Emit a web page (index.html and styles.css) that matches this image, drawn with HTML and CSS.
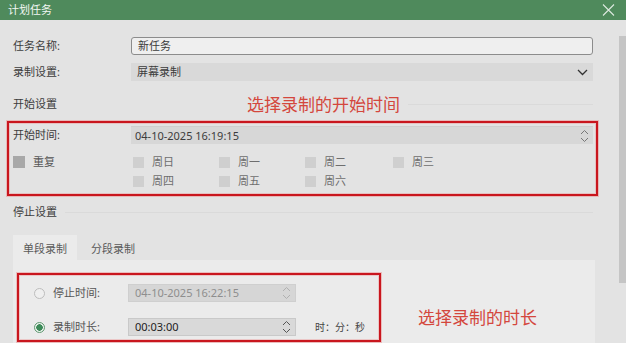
FILE: index.html
```html
<!DOCTYPE html>
<html lang="zh">
<head>
<meta charset="utf-8">
<link rel="stylesheet" href="styles.css">
</head>
<body>
<div class="window">
  <div class="titlebar">
    <span class="title">计划任务</span>
    <svg class="close" width="13" height="12" viewBox="0 0 13 12"><path d="M1 0.5 L12 11.5 M12 0.5 L1 11.5" stroke="#dce8df" stroke-width="1.1" fill="none"/></svg>
  </div>
  <div class="body">
    <div class="main">
      <div class="row r1">
        <span class="label">任务名称:</span>
        <div class="field text">新任务</div>
      </div>
      <div class="row r2">
        <span class="label">录制设置:</span>
        <div class="field select"><span class="grow">屏幕录制</span>
          <svg width="11" height="7" viewBox="0 0 11 7"><path d="M1 1 L5.5 5.5 L10 1" stroke="#333" stroke-width="1.3" fill="none"/></svg>
        </div>
      </div>
      <div class="heading h1">
        <span class="htext">开始设置</span>
        <span class="note note1">选择录制的开始时间</span>
        <span class="rule"></span>
      </div>
      <div class="redbox box1">
        <div class="row">
          <span class="label">开始时间:</span>
          <div class="field date"><span class="grow">04-10-2025 16:19:15</span>
            <svg class="spin" width="9" height="14" viewBox="0 0 9 14"><path d="M1 5 L4.5 1.5 L8 5 M1 9 L4.5 12.5 L8 9" stroke="#777" stroke-width="1" fill="none"/></svg>
          </div>
        </div>
        <div class="repeat">
          <div class="chk repchk"><span class="box dark"></span><span class="clabel">重复</span></div>
          <div class="days">
            <div class="chk"><span class="box"></span><span class="clabel">周日</span></div>
            <div class="chk"><span class="box"></span><span class="clabel">周一</span></div>
            <div class="chk"><span class="box"></span><span class="clabel">周二</span></div>
            <div class="chk"><span class="box"></span><span class="clabel">周三</span></div>
            <div class="chk"><span class="box"></span><span class="clabel">周四</span></div>
            <div class="chk"><span class="box"></span><span class="clabel">周五</span></div>
            <div class="chk"><span class="box"></span><span class="clabel">周六</span></div>
          </div>
        </div>
      </div>
      <div class="heading h2">
        <span class="htext">停止设置</span>
        <span class="rule"></span>
      </div>
      <div class="tabs">
        <span class="tab active">单段录制</span>
        <span class="tab">分段录制</span>
      </div>
      <div class="panel">
        <div class="redbox box2">
          <div class="srow">
            <span class="radio"></span>
            <span class="slabel">停止时间:</span>
            <div class="field sfield disabled"><span class="grow">04-10-2025 16:22:15</span>
              <svg class="spin" width="9" height="14" viewBox="0 0 9 14"><path d="M1 5 L4.5 1.5 L8 5 M1 9 L4.5 12.5 L8 9" stroke="#b0b0b0" stroke-width="1" fill="none"/></svg>
            </div>
          </div>
          <div class="srow r-second">
            <span class="radio on"></span>
            <span class="slabel">录制时长:</span>
            <div class="field sfield active-field"><span class="grow">00:03:00</span>
              <svg class="spin" width="9" height="14" viewBox="0 0 9 14"><path d="M1 5 L4.5 1.5 L8 5 M1 9 L4.5 12.5 L8 9" stroke="#555" stroke-width="1" fill="none"/></svg>
            </div>
            <span class="units">时：分：秒</span>
          </div>
        </div>
        <span class="note note2">选择录制的时长</span>
      </div>
    </div>
    <div class="scrollbar"><div class="thumb"></div></div>
  </div>
</div>
</body>
</html>
```

FILE: styles.css
```css
* { box-sizing: border-box; }
html, body { margin: 0; padding: 0; }
body {
  font-family: "Noto Sans", "Noto Sans CJK SC", sans-serif;
  font-size: 11px;
  line-height: 16px;
  color: #3c3c3c;
  background: #e3e3e3;
}
.window {
  width: 626px;
  height: 343px;
  overflow: hidden;
  background: #e3e3e3;
}
.titlebar {
  height: 20px;
  background: #4f8a5c;
  display: flex;
  align-items: center;
  justify-content: space-between;
  padding: 0 11px 0 8px;
}
.title { color: #f2f7f3; font-size: 11px; }
.close { display: block; }
.body { display: flex; height: 323px; }
.main {
  flex: 1;
  display: flex;
  flex-direction: column;
  padding: 0 26px 0 13px;
}
.scrollbar { width: 7px; padding-top: 16px; }
.thumb { height: 247px; background: #c5c5c5; }

.row { display: flex; align-items: center; height: 18px; }
.r1 { margin-top: 17px; }
.r2 { margin-top: 8px; }
.label { width: 118px; flex: none; }
.field {
  flex: 1;
  height: 18px;
  display: flex;
  align-items: center;
  padding: 0 6px;
}
.grow { flex: 1; }
.text {
  background: #efefef;
  border: 1px solid #8c8c8c;
  border-radius: 3px;
}
.select { background: #d9d9d9; padding-right: 5px; }
.select svg { display: block; }
.date { background: #d7d7d7; border-top: 1px solid #cfcfcf; padding-left: 4px; padding-right: 4px; }
.spin { display: block; }

.heading { display: flex; align-items: center; height: 16px; }
.h1 { margin-top: 15px; }
.h2 { margin-top: 8px; }
.htext { flex: none; }
.rule { flex: 1; height: 1px; background: #dadada; margin-left: 8px; }
.note {
  color: #d4473d;
  font-family: "Noto Sans CJK SC", sans-serif;
  font-size: 17px;
  line-height: 16px;
  flex: none;
}
.note1 { margin-left: 190px; }

.redbox {
  border: 2px solid #c9161e;
  box-shadow: 0 0 0 1px rgba(235, 130, 130, 0.45), inset 0 0 0 1px rgba(235, 130, 130, 0.35);
}
.box1 {
  margin: 9px -5px 0 -6px;
  padding: 3px 3px 4px 4px;
}
.repeat { display: flex; margin-top: 9px; }
.repchk { width: 120px; flex: none; height: 18px; }
.days {
  display: grid;
  grid-template-columns: 86px 86px 88px auto;
  grid-auto-rows: 18px;
  row-gap: 1px;
}
.chk { display: flex; align-items: center; }
.box { width: 11px; height: 11px; background: #cfcfcf; flex: none; }
.box.dark { width: 12px; height: 12px; background: #a8a8a8; }
.clabel { margin-left: 8px; color: #6e6e6e; }
.repchk .clabel { color: #555; }

.tabs { display: flex; margin-top: 15px; height: 25px; }
.tab { padding: 6px 10px 0 10px; color: #5a5a5a; margin-right: 4px; white-space: nowrap; }
.tab.active { background: #ebebeb; }

.panel {
  flex: 1;
  background: #ebebeb;
  margin-right: -2px;
  padding: 13px 0 0 4px;
  display: flex;
  align-items: flex-start;
}
.box2 {
  width: 364px;
  padding: 9px 0 4px 15px;
}
.srow { display: flex; align-items: center; height: 18px; }
.r-second { margin-top: 16px; }
.radio {
  width: 11px; height: 11px;
  border-radius: 50%;
  border: 1px solid #bdbdbd;
  background: #efefef;
  flex: none;
}
.radio.on {
  border: 1px solid #5f9870;
  background: radial-gradient(circle, #3c8a58 0 3px, #e9f1eb 3.5px);
}
.slabel { width: 75px; margin-left: 8px; flex: none; color: #555; }
.sfield { flex: none; width: 168px; padding: 0 4px 0 6px; }
.disabled { background: #d6d6d6; color: #8e8e8e; border: 1px solid #cfcfcf; }
.active-field { background: #d9d9d9; color: #222; border: 1px solid #c9c9c9; }
.units { margin-left: 19px; font-size: 10px; color: #444; }
.note2 { margin-left: 37px; margin-top: 36px; }
```
